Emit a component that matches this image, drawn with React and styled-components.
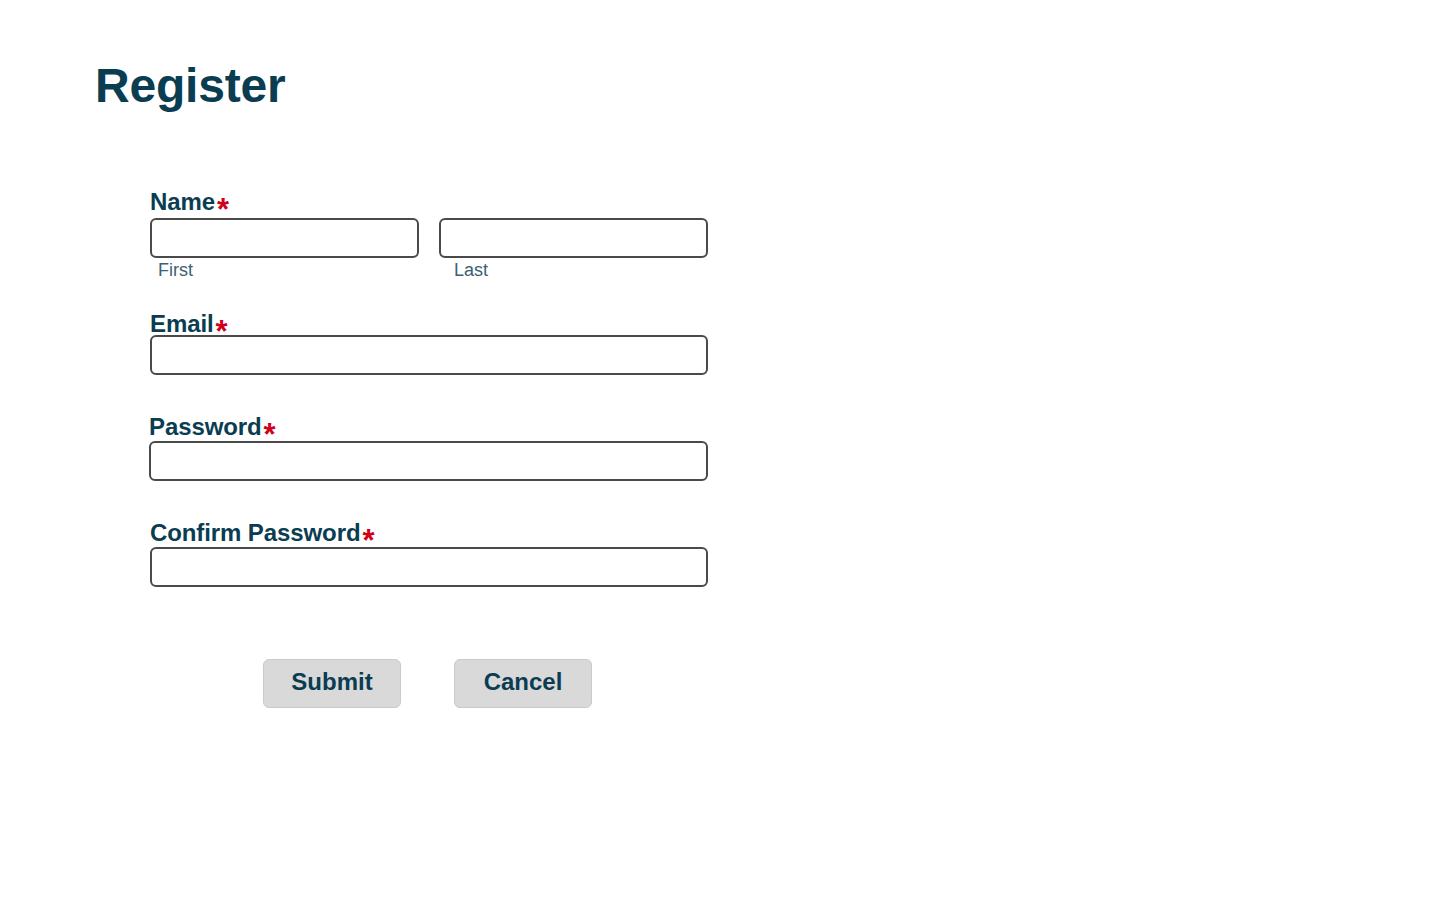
import React from "react";
import styled, { createGlobalStyle } from "styled-components";

const GlobalStyle = createGlobalStyle`
  html, body { margin: 0; padding: 0; background: #ffffff; }
  body { font-family: "Liberation Sans", Arial, Helvetica, sans-serif; }
  * { box-sizing: border-box; }
`;

const Page = styled.main`
  padding: 62px 0 0 95px;
  min-height: 908px;
`;

const Title = styled.h1`
  margin: 0;
  font-size: 48px;
  line-height: 48px;
  font-weight: 700;
  color: #0a3d52;
  letter-spacing: -0.2px;
`;

const Form = styled.form`
  width: 558px;
  margin: 82px 0 0 55px;
  display: flex;
  flex-direction: column;
`;

const Field = styled.div`
  display: flex;
  flex-direction: column;
  margin-top: ${(p) => p.$top || 0}px;
  margin-left: ${(p) => p.$shift || 0}px;
`;

const Label = styled.label`
  display: block;
  font-size: 24px;
  line-height: 20px;
  font-weight: 700;
  color: #0a3d52;
  letter-spacing: -0.1px;
  margin-bottom: ${(p) => p.$gap}px;
`;

const Req = styled.span`
  color: #d0021b;
  margin-left: 2px;
  font-size: 31px;
  line-height: 0;
  vertical-align: -10px;
`;

const NameRow = styled.div`
  display: grid;
  grid-template-columns: 1fr 1fr;
  column-gap: 20px;
`;

const Part = styled.div`
  display: flex;
  flex-direction: column;
`;

const Input = styled.input`
  width: 100%;
  height: 40px;
  border: 2px solid #4a4a4a;
  border-radius: 6px;
  background: #ffffff;
  padding: 0 8px;
  font-family: inherit;
  font-size: 18px;
  outline: none;
`;

const Sub = styled.span`
  display: block;
  font-size: 18px;
  line-height: 18px;
  color: #3a6173;
  margin-top: 3px;
  padding-left: ${(p) => p.$indent}px;
`;

const Actions = styled.div`
  display: flex;
  gap: 53px;
  padding-left: 113px;
  margin-top: 72px;
`;

const Button = styled.button`
  width: 138px;
  height: 49px;
  background: #d9d9d9;
  border: 1px solid #cacaca;
  border-radius: 6px;
  font-family: inherit;
  font-size: 24px;
  font-weight: 700;
  color: #0a3d52;
  cursor: pointer;
  padding: 0 0 3px;
`;

export default function App() {
  return (
    <>
      <GlobalStyle />
      <Page>
        <Title>Register</Title>
        <Form onSubmit={(e) => e.preventDefault()}>
          <Field $top={0}>
            <Label $gap={6}>
              Name<Req>*</Req>
            </Label>
            <NameRow>
              <Part>
                <Input type="text" aria-label="First" />
                <Sub $indent={8}>First</Sub>
              </Part>
              <Part>
                <Input type="text" aria-label="Last" />
                <Sub $indent={15}>Last</Sub>
              </Part>
            </NameRow>
          </Field>
          <Field $top={35}>
            <Label $gap={1}>
              Email<Req>*</Req>
            </Label>
            <Input type="email" />
          </Field>
          <Field $top={42} $shift={-1}>
            <Label $gap={4}>
              Password<Req>*</Req>
            </Label>
            <Input type="password" />
          </Field>
          <Field $top={42}>
            <Label $gap={4}>
              Confirm Password<Req>*</Req>
            </Label>
            <Input type="password" />
          </Field>
          <Actions>
            <Button type="submit">Submit</Button>
            <Button type="button">Cancel</Button>
          </Actions>
        </Form>
      </Page>
    </>
  );
}
